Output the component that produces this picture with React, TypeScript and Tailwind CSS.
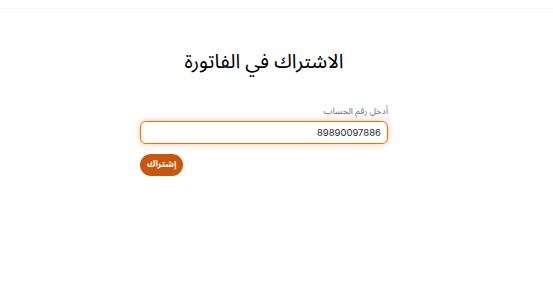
import { useState } from "react";

export default function App() {
    const [account, setAccount] = useState("89890097886");

    return (
        <div className="min-h-screen bg-white font-[family-name:'Noto_Sans_Arabic',sans-serif]">
            <div className="h-[9px] border-b border-gray-100" />

            <div className="flex justify-center pr-[25px]">
                <div className="w-[248px] pt-[38px]">
                    <h1 dir="rtl" className="text-center text-[20px] leading-[30px] text-black">الاشتراك في الفاتورة</h1>

                    <label dir="rtl" className="mt-[29px] block text-right text-[9px] leading-[12px] text-gray-500">
                        أدخل رقم الحساب
                    </label>
                    <input
                        dir="rtl"
                        autoFocus
                        value={account}
                        onChange={(e) => setAccount(e.target.value)}
                        className="mt-[3px] block h-[23px] w-full rounded-[6px] border border-orange-500 bg-white px-[6px] font-[family-name:Inter,sans-serif] text-[9.5px] text-gray-800 shadow-[0_0_6px_rgba(249,115,22,0.4)] outline-none"
                    />

                    <div className="mt-[10px] flex">
                        <button className="h-[22px] rounded-full bg-[#c9560a] px-[7px] text-[9px] font-bold text-white">
                            إشتراك
                        </button>
                    </div>
                </div>
            </div>
        </div>
    );
}
